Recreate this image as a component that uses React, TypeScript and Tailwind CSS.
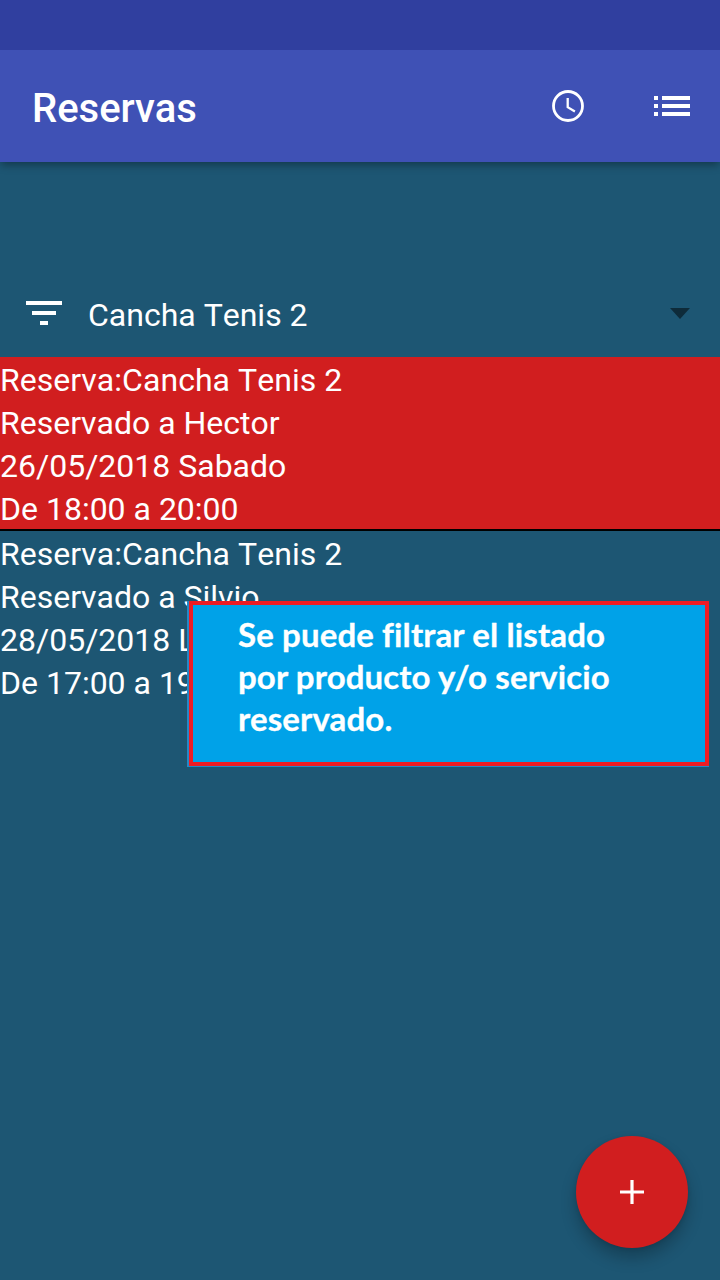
const bookings = [
  {
    lines: ["Reserva:Cancha Tenis 2", "Reservado a Hector", "26/05/2018 Sabado", "De 18:00 a 20:00"],
    row: "bg-[#d11e1f] border-b-2 border-black",
  },
  {
    lines: ["Reserva:Cancha Tenis 2", "Reservado a Silvio", "28/05/2018 Lunes", "De 17:00 a 19:00"],
    row: "",
  },
];

function Header() {
  return (
    <header className="relative z-10 flex h-28 items-center bg-[#3f51b5] pl-8 pr-6 shadow-[0_4px_8px_-1px_rgba(0,0,0,0.34)]">
      <h1 className="flex-1 pt-1.5 text-[40px] leading-none font-medium">Reservas</h1>
      <button aria-label="Historial" className="mr-14 size-12">
        <svg viewBox="0 0 48 48" className="size-12" fill="none" stroke="white">
          <circle cx="24" cy="24" r="14.5" strokeWidth="2.8" />
          <path d="M23.7 16v9.2l7.2 4.2" strokeWidth="2.3" />
        </svg>
      </button>
      <button aria-label="Listado" className="size-12">
        <svg viewBox="0 0 48 48" className="size-12" fill="white">
          <path d="M6 14h4v4H6zM14 14h28v4H14zM6 22h4v4H6zM14 22h28v4H14zM6 30h4v4H6zM14 30h28v4H14z" />
        </svg>
      </button>
    </header>
  );
}

export default function App() {
  return (
    <div className="relative flex h-[1280px] w-[720px] flex-col overflow-hidden bg-[#1d5673] font-['Roboto',sans-serif] text-white">
      <div className="relative z-20 h-[50px] shrink-0 bg-[#303f9f]" />
      <Header />
      <main className="flex flex-1 flex-col pt-[108px]">
        <div className="flex h-[87px] items-center pb-0.5 pl-5 pr-[30px]">
          <svg viewBox="0 0 48 48" className="size-12" fill="white">
            <path d="M6 12h36v4H6zM12 22h24v4H12zM20 32h8v4H20z" />
          </svg>
          <span className="flex-1 pl-5 pt-1.5 text-[32px] leading-[43px] [font-kerning:none]">Cancha Tenis 2</span>
          <svg viewBox="0 0 20 11" className="mt-px h-[11px] w-5" fill="#0e2b3a">
            <path d="M0 0h20L10 11z" />
          </svg>
        </div>
        <ul>
          {bookings.map((b) => (
            <li key={b.lines[1]} className={b.row}>
              {b.lines.map((line) => (
                <p key={line} className="h-[43px] pt-0.5 text-[32px] leading-[43px] whitespace-nowrap first:tracking-[0.05px] [font-kerning:none]">
                  {line}
                </p>
              ))}
            </li>
          ))}
        </ul>
      </main>
      <div className="absolute left-[187px] top-[601px] h-[166px] w-[522px] border-b border-l-2 border-[#2588c6]">
        <div className="h-full border-4 border-[#ed1c24] bg-[#00a2e8] pl-[45px] pt-2 font-['Lato','Open_Sans',sans-serif] text-[33px] leading-[42px] font-bold tracking-[0.12px] whitespace-nowrap [font-variant-ligatures:none] [-webkit-text-stroke:0.3px_white]">
          <p>Se puede filtrar el listado</p>
          <p>por producto y/o servicio</p>
          <p>reservado.</p>
        </div>
      </div>
      <button
        aria-label="Agregar reserva"
        className="absolute left-[576px] top-[1136px] flex size-28 items-center justify-center rounded-full bg-[#d11e1f] shadow-[0_10px_16px_rgba(0,0,0,0.24),0_1px_4px_rgba(0,0,0,0.1)]"
      >
        <svg viewBox="0 0 24 24" className="size-6" stroke="white" strokeWidth="3.2">
          <path d="M12 0v24M0 12h24" />
        </svg>
      </button>
    </div>
  );
}
